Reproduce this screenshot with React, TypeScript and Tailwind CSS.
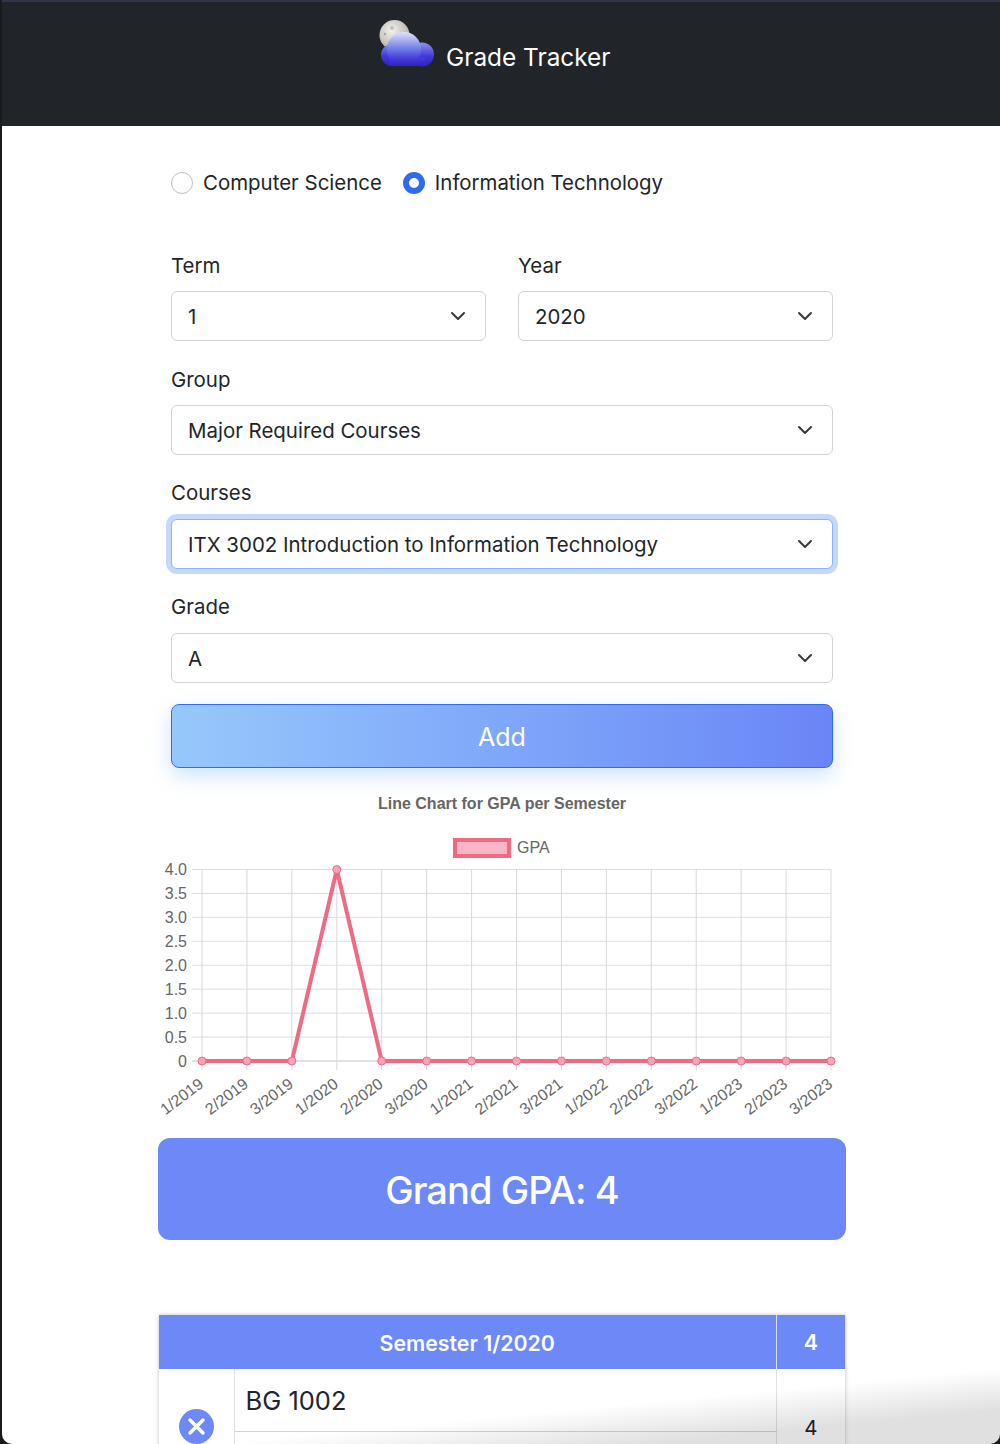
const labels = ["1/2019","2/2019","3/2019","1/2020","2/2020","3/2020","1/2021","2/2021","3/2021","1/2022","2/2022","3/2022","1/2023","2/2023","3/2023"];
const yLabels = ["4.0","3.5","3.0","2.5","2.0","1.5","1.0","0.5","0"];
const X0 = 44, STEP = 44.93, Y0 = 33.5, YSTEP = 23.94;

function Chevron() {
  return (
    <svg width="16" height="16" viewBox="0 0 16 16" className="shrink-0">
      <path d="M2 5l6 6 6-6" fill="none" stroke="#343a40" strokeWidth="2" strokeLinecap="round" strokeLinejoin="round" />
    </svg>
  );
}

function Select({ value, focus }: { value: string; focus?: boolean }) {
  return (
    <div className={focus
      ? "flex h-[50px] items-center justify-between rounded-md border border-[#86b7fe] bg-white pl-4 pr-[19px] shadow-[0_0_0_5px_#c6d9fb]"
      : "flex h-[50px] items-center justify-between rounded-md border border-[#ced4da] bg-white pl-4 pr-[19px]"}>
      <span className="pt-[2px] text-[20.45px] leading-[30px] text-[#212529]">{value}</span>
      <Chevron />
    </div>
  );
}

function Field({ label, value, focus, className, wide }: { label: string; value: string; focus?: boolean; className?: string; wide?: boolean }) {
  return (
    <div className={className}>
      <div className={wide ? "mb-[11px] text-[20.45px] leading-[30px] text-[#212529]" : "mb-[10px] text-[20.45px] leading-[30px] text-[#212529]"}>{label}</div>
      <Select value={value} focus={focus} />
    </div>
  );
}

function Logo() {
  return (
    <svg width="56" height="50" viewBox="0 0 56 50" className="shrink-0">
      <defs>
        <radialGradient id="moon" cx="0.4" cy="0.35" r="0.75">
          <stop offset="0" stopColor="#f4f2ee" />
          <stop offset="1" stopColor="#a8a59d" />
        </radialGradient>
        <linearGradient id="lobeC" gradientUnits="userSpaceOnUse" x1="0" y1="12" x2="0" y2="46">
          <stop offset="0" stopColor="#dfe3fb" />
          <stop offset="0.5" stopColor="#6f7bea" />
          <stop offset="0.8" stopColor="#4238d8" />
          <stop offset="1" stopColor="#2e22bc" />
        </linearGradient>
        <linearGradient id="lobeS" gradientUnits="userSpaceOnUse" x1="0" y1="22" x2="0" y2="46">
          <stop offset="0" stopColor="#8f98f2" />
          <stop offset="0.6" stopColor="#4238d8" />
          <stop offset="1" stopColor="#2e22bc" />
        </linearGradient>
      </defs>
      <circle cx="15.5" cy="15" r="15" fill="url(#moon)" />
      <circle cx="6" cy="14" r="1.2" fill="#a9a69e" />
      <circle cx="13" cy="8" r="2" fill="#c4c1b9" />
      <circle cx="43" cy="34.5" r="12" fill="url(#lobeS)" />
      <circle cx="13" cy="35" r="11" fill="url(#lobeS)" />
      <circle cx="25" cy="29" r="17" fill="url(#lobeC)" />
      <rect x="10" y="38" width="36" height="8" fill="url(#lobeC)" />
    </svg>
  );
}

function Chart() {
  const pts = labels.map((_, i) => [X0 + i * STEP, i === 3 ? Y0 : Y0 + 8 * YSTEP]);
  return (
    <svg width="688" height="302" viewBox="0 0 688 302" className="block" style={{ fontFamily: "'Liberation Sans', Arial, sans-serif" }}>
      <rect x="297" y="4" width="54" height="16" fill="#f6b6c3" stroke="#ef6a85" strokeWidth="4" />
      <text x="359" y="16.5" fontSize="16" fill="#666">GPA</text>
      {yLabels.map((l, i) => (
        <g key={l}>
          <line x1="34" x2={X0 + 14 * STEP} y1={Y0 + i * YSTEP} y2={Y0 + i * YSTEP} stroke={i === 8 ? "#c4c4c4" : "#dedede"} />
          <text x="29" y={Y0 + i * YSTEP + 5.5} fontSize="16" fill="#666" textAnchor="end">{l}</text>
        </g>
      ))}
      {labels.map((l, i) => {
        const x = X0 + i * STEP;
        return (
          <g key={l}>
            <line x1={x} x2={x} y1={Y0} y2={Y0 + 8 * YSTEP + 9} stroke="#d8d8d8" />
            <text fontSize="16" fill="#666" textAnchor="end" transform={`translate(${x + 2.5} ${Y0 + 8 * YSTEP + 25}) rotate(-37)`}>{l}</text>
          </g>
        );
      })}
      <polyline points={pts.map((p) => p.join(",")).join(" ")} fill="none" stroke="#ef6a85" strokeWidth="4" />
      {pts.map((p, i) => (
        <circle key={i} cx={p[0]} cy={p[1]} r="4" fill="#f6a5b6" stroke="#ef6a85" />
      ))}
    </svg>
  );
}

export default function App() {
  return (
    <div className="h-[1444px] w-[1000px] overflow-hidden bg-[#1a1a1a]" style={{ fontFamily: "Inter, 'Liberation Sans', sans-serif" }}>
      <div className="relative ml-[2px] flex h-full flex-col overflow-hidden rounded-b-[10px] bg-white">
        <header className="flex h-[126px] shrink-0 items-start border-t-2 border-[#33334a] bg-[#212529] pl-[377px] pt-[18px]">
          <Logo />
          <span className="ml-[11px] mt-[19px] text-[24.4px] leading-[36px] text-white">Grade Tracker</span>
        </header>

        <main className="ml-[156px] w-[688px]">
          <div className="px-[13px] pt-[42px]">
            <div className="flex items-center">
              <span className="h-[22px] w-[22px] rounded-full border border-[#bdbdbd] bg-white" />
              <span className="ml-[10px] text-[20.45px] leading-[30px] text-[#212529]">Computer Science</span>
              <span className="ml-[21px] h-[22px] w-[22px] rounded-full border-[6px] border-[#2f6bf0] bg-white" />
              <span className="ml-[10px] text-[20.4px] leading-[30px] text-[#212529]">Information Technology</span>
            </div>

            <div className="mt-[53px] grid grid-cols-2 gap-x-[32px]">
              <Field label="Term" value="1" />
              <Field label="Year" value="2020" />
            </div>
            <Field className="mt-[24px]" label="Group" value="Major Required Courses" />
            <Field className="mt-[23px]" label="Courses" value="ITX 3002 Introduction to Information Technology" focus wide />
            <Field className="mt-[23px]" label="Grade" value="A" wide />

            <button className="mt-[21px] block h-[64px] w-full rounded-lg border border-[#2f6bf0] bg-gradient-to-r from-[#97c8fb] to-[#6a85f6] pt-[4px] text-[25px] text-white shadow-[0_8px_20px_rgba(100,160,250,0.3)]">
              Add
            </button>
          </div>

          <div className="mt-[26px] text-center text-[16px] font-bold leading-[20px] text-[#666]" style={{ fontFamily: "'Liberation Sans', Arial, sans-serif" }}>
            Line Chart for GPA per Semester
          </div>
          <div className="mt-[22px] h-[302px]">
            <Chart />
          </div>

          <div className="flex h-[102px] items-center justify-center rounded-xl bg-[#6c89f7] pt-[2px] text-[38px] font-medium tracking-[-0.9px] text-white">
            Grand GPA: 4
          </div>

          <table className="ml-px mt-[75px] w-[686px] table-fixed border-collapse shadow-[0_0_4px_rgba(0,0,0,0.25)]">
            <colgroup>
              <col className="w-[75px]" />
              <col />
              <col className="w-[69px]" />
            </colgroup>
            <tbody>
              <tr className="h-[54px] bg-[#6c89f7] text-[21.3px] font-semibold text-white">
                <th colSpan={2} className="pt-[3px] font-semibold">Semester 1/2020</th>
                <th className="border-l border-[#d9dee8] pt-[2px] font-semibold">4</th>
              </tr>
              <tr>
                <td rowSpan={2} className="border-r border-[#dee2e6] pb-[3px] text-center align-middle">
                  <span className="inline-flex h-[35px] w-[35px] items-center justify-center rounded-full bg-[#6c89f7] align-middle">
                    <svg width="19" height="19" viewBox="0 0 19 19">
                      <path d="M3 3l13 13M16 3L3 16" stroke="#fff" strokeWidth="3.5" strokeLinecap="round" />
                    </svg>
                  </span>
                </td>
                <td className="h-[62px] border-b border-[#d4d4d4] px-[11px] pt-[2px] text-[25.5px] leading-[36px] text-[#212529]">BG 1002</td>
                <td rowSpan={2} className="border-l border-[#dee2e6] text-center align-middle text-[20.45px] text-[#212529]">4</td>
              </tr>
              <tr>
                <td className="h-[56px]" />
              </tr>
            </tbody>
          </table>
        </main>
        <div className="pointer-events-none absolute inset-x-0 bottom-0 h-[76px] bg-[linear-gradient(174.5deg,transparent_56%,rgba(0,0,0,0.12)_80%)]" />
      </div>
    </div>
  );
}
